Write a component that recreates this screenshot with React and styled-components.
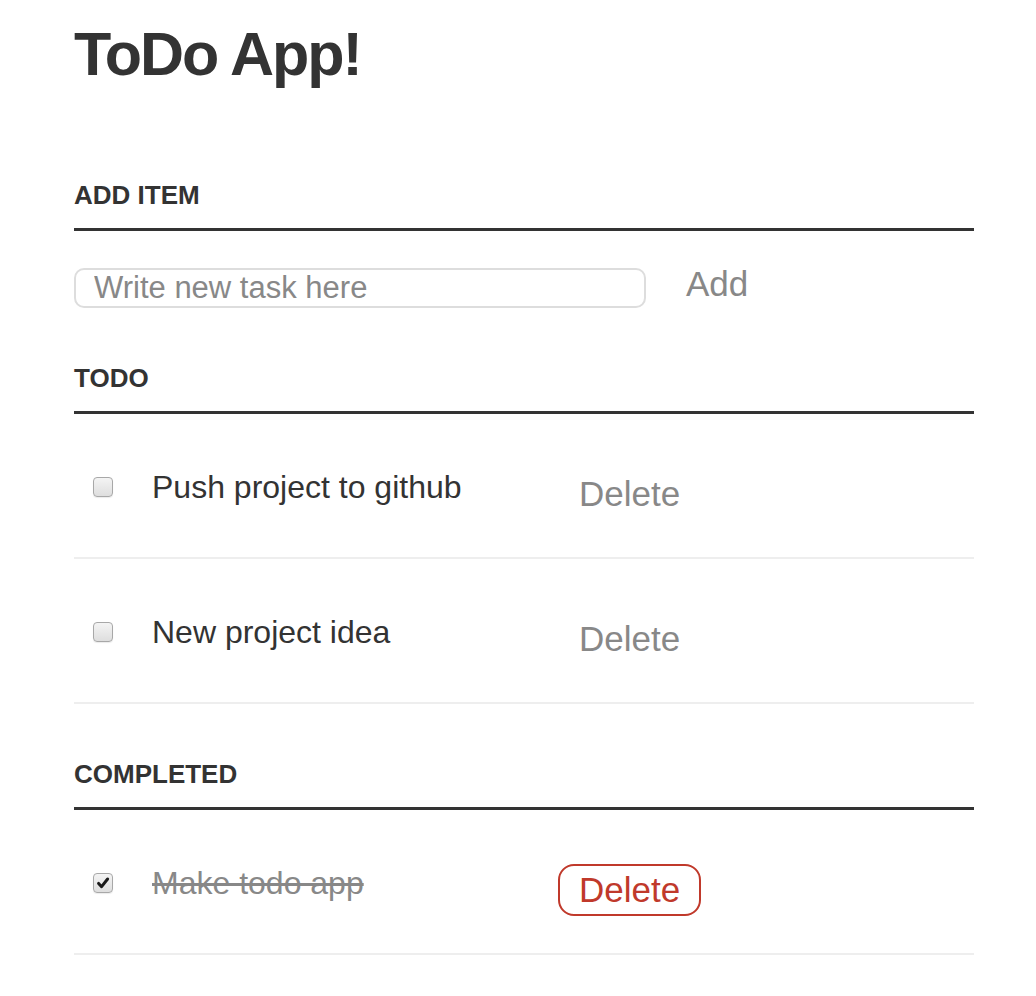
import { useState } from 'react';
import styled, { createGlobalStyle } from 'styled-components';

const GlobalStyle = createGlobalStyle`
  body {
    margin: 0;
    background: #fff;
    color: #333;
    font-family: 'Liberation Sans', Arial, Helvetica, sans-serif;
  }
`;

const initialTasks = [
  { id: 1, text: 'Push project to github', done: false },
  { id: 2, text: 'New project idea', done: false },
  { id: 3, text: 'Make todo app', done: true },
];

const CheckBox = ({ checked, onChange }) => (
  <CheckWrap>
    <input type="checkbox" checked={checked} onChange={onChange} />
    <Box checked={checked}>
      {checked && (
        <svg width="14" height="14" viewBox="0 0 14 14">
          <path
            d="M2.6 7.4l3 3.3L11.6 3"
            stroke="#1a1a1a"
            strokeWidth="3"
            fill="none"
            strokeLinecap="round"
            strokeLinejoin="round"
          />
        </svg>
      )}
    </Box>
  </CheckWrap>
);

const TaskRow = ({ task, onToggle, onDelete }) => (
  <TaskItem>
    <CheckBox checked={task.done} onChange={onToggle} />
    <TaskLabel done={task.done}>{task.text}</TaskLabel>
    <DeleteButton danger={task.done} onClick={onDelete}>
      Delete
    </DeleteButton>
  </TaskItem>
);

const App = () => {
  const [tasks, setTasks] = useState(initialTasks);
  const [draft, setDraft] = useState('');

  const addTask = () => {
    if (!draft.trim()) return;
    setTasks([...tasks, { id: Date.now(), text: draft.trim(), done: false }]);
    setDraft('');
  };

  const toggle = (id) =>
    setTasks(tasks.map((t) => (t.id === id ? { ...t, done: !t.done } : t)));

  const remove = (id) => setTasks(tasks.filter((t) => t.id !== id));

  const renderList = (list) => (
    <TaskList>
      {list.map((task) => (
        <TaskRow
          key={task.id}
          task={task}
          onToggle={() => toggle(task.id)}
          onDelete={() => remove(task.id)}
        />
      ))}
    </TaskList>
  );

  return (
    <>
      <GlobalStyle />
      <Container>
        <Title>ToDo App!</Title>

        <SectionTitle>Add item</SectionTitle>
        <AddRow>
          <TaskInput
            type="text"
            placeholder="Write new task here"
            value={draft}
            onChange={(e) => setDraft(e.target.value)}
          />
          <AddButton onClick={addTask}>Add</AddButton>
        </AddRow>

        <SectionTitle>Todo</SectionTitle>
        {renderList(tasks.filter((t) => !t.done))}

        <SectionTitle>Completed</SectionTitle>
        {renderList(tasks.filter((t) => t.done))}
      </Container>
    </>
  );
};

export default App;

const Container = styled.main`
  width: 900px;
  margin-left: 74px;
  padding: 24px 0 40px;
`;

const Title = styled.h1`
  margin: 0 0 95px;
  font-size: 61px;
  line-height: 61px;
  font-weight: 700;
  letter-spacing: -2px;
  color: #333;
`;

const SectionTitle = styled.h3`
  margin: 55px 0 0;
  padding-bottom: 18px;
  font-size: 26px;
  line-height: 30px;
  font-weight: 700;
  text-transform: uppercase;
  color: #333;
  border-bottom: 3px solid #333;
`;

const AddRow = styled.div`
  display: flex;
  align-items: flex-start;
  padding-top: 37px;
`;

const TaskInput = styled.input`
  box-sizing: border-box;
  width: 572px;
  height: 40px;
  margin: 0;
  padding: 0 16px 0 18px;
  border: 2px solid #ddd;
  border-radius: 10px;
  background: #fff;
  font-family: inherit;
  font-size: 31px;
  color: #333;
  outline: none;

  &::placeholder {
    color: #888;
  }
`;

const AddButton = styled.button`
  margin: -4px 0 0 40px;
  padding: 0;
  border: 0;
  background: none;
  font-family: inherit;
  font-size: 35px;
  line-height: 40px;
  color: #888;
  cursor: pointer;
`;

const TaskList = styled.ul`
  list-style: none;
  margin: 0;
  padding: 0;
`;

const TaskItem = styled.li`
  display: flex;
  align-items: flex-start;
  padding: 53px 0 37px;
  border-bottom: 2px solid #eee;
`;

const CheckWrap = styled.label`
  position: relative;
  display: block;
  margin: 10px 0 0 19px;
  cursor: pointer;

  input {
    position: absolute;
    opacity: 0;
    width: 0;
    height: 0;
    margin: 0;
  }
`;

const Box = styled.span`
  box-sizing: border-box;
  display: flex;
  align-items: center;
  justify-content: center;
  width: 20px;
  height: 20px;
  border: 1px solid #a8a8a8;
  border-radius: 4px;
  background: linear-gradient(#f4f4f4, #dedede);
  box-shadow: 0 1px 1px rgba(0, 0, 0, 0.08);
`;

const TaskLabel = styled.span`
  width: 406px;
  margin-left: 39px;
  font-size: 32px;
  line-height: 40px;
  color: ${(props) => (props.done ? '#888' : '#333')};
  text-decoration: ${(props) => (props.done ? 'line-through' : 'none')};
`;

const DeleteButton = styled.button`
  margin-top: 1px;
  padding: 4px 19px;
  border: 2px solid ${(props) => (props.danger ? '#c0392b' : 'transparent')};
  border-radius: 16px;
  background: none;
  font-family: inherit;
  font-size: 35px;
  line-height: 40px;
  color: ${(props) => (props.danger ? '#c0392b' : '#888')};
  cursor: pointer;
`;
